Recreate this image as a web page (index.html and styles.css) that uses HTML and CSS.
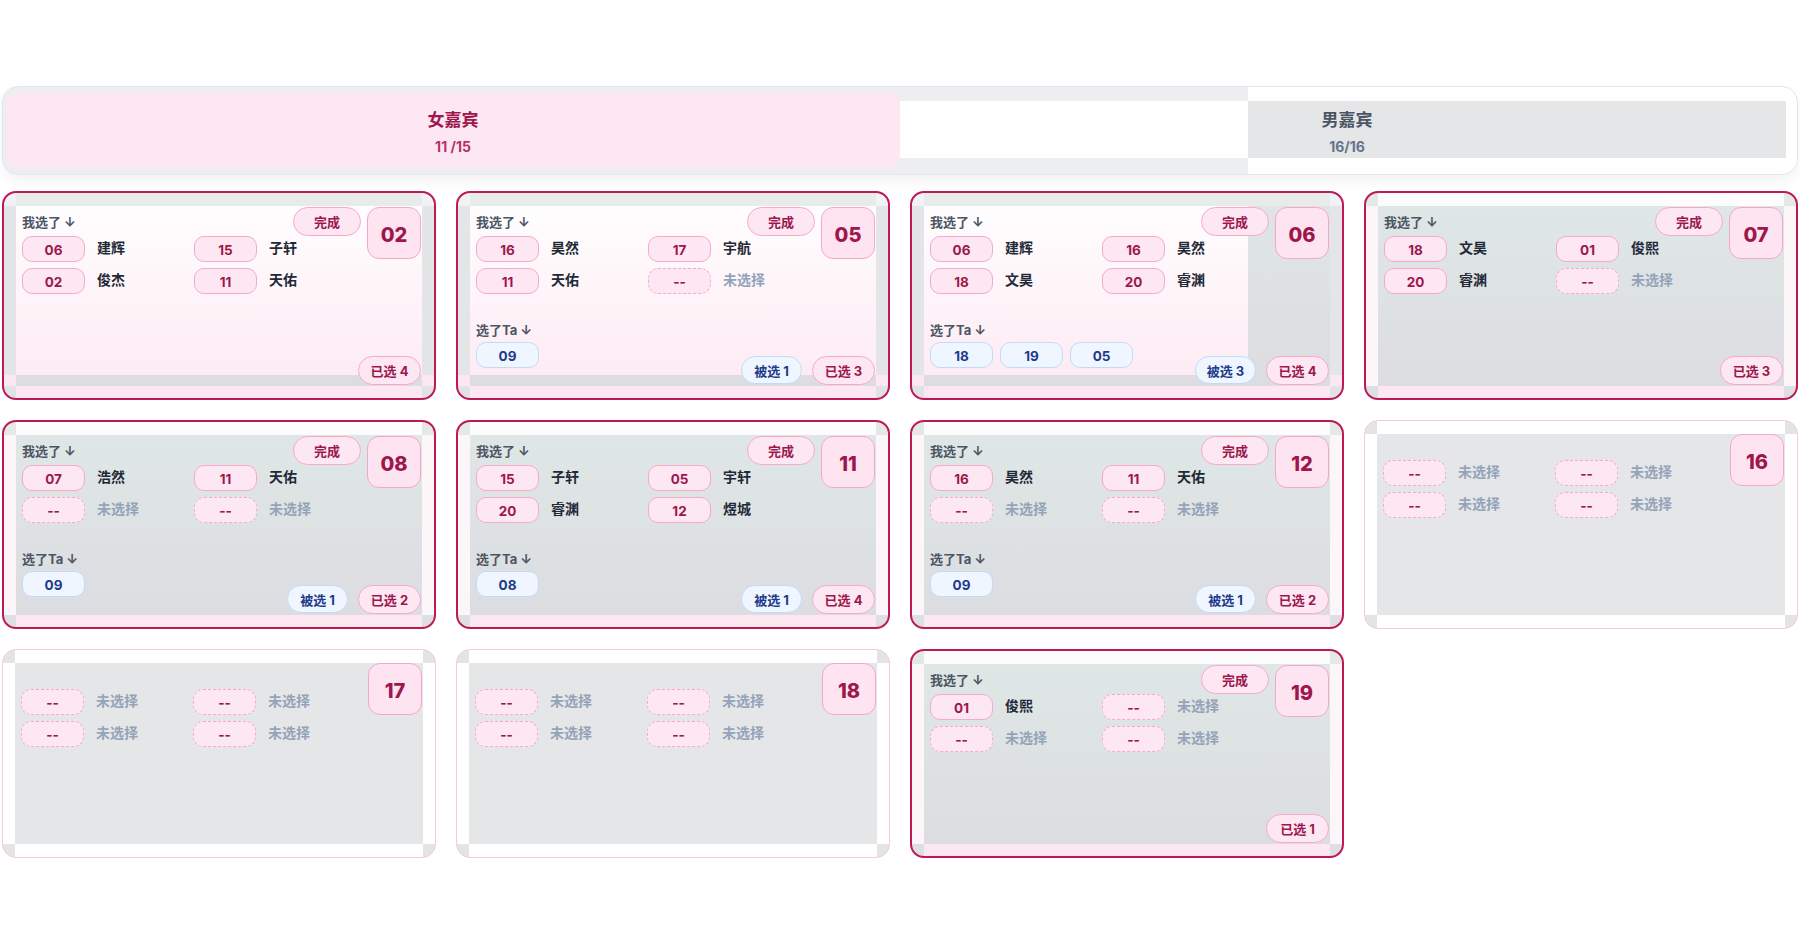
FILE: index.html
```html
<!DOCTYPE html>
<html lang="zh-CN">
<head>
<meta charset="utf-8">
<title>嘉宾选择</title>
<link rel="stylesheet" href="styles.css">
</head>
<body>
<div class="page">
  <div class="tabs">
    <div class="tab tab-f">
      <div class="tab-title">女嘉宾</div>
      <div class="tab-count">11 /15</div>
    </div>
    <div class="tab tab-m">
      <div class="tab-title">男嘉宾</div>
      <div class="tab-count">16/16</div>
    </div>
  </div>

  <div class="grid">
    <!-- 02 -->
    <div class="card pink">
      <div class="center">
        <div class="body">
          <div class="main">
            <div class="head"><span class="label">我选了 ↓</span><span class="done">完成</span></div>
            <div class="picks">
              <div class="pick"><span class="chip">06</span><span class="name">建辉</span></div>
              <div class="pick"><span class="chip">15</span><span class="name">子轩</span></div>
              <div class="pick"><span class="chip">02</span><span class="name">俊杰</span></div>
              <div class="pick"><span class="chip">11</span><span class="name">天佑</span></div>
            </div>
          </div>
          <div class="numbox">02</div>
        </div>
      </div>
      <div class="foot"><span class="pill sel">已选 4</span></div>
    </div>

    <!-- 05 -->
    <div class="card pink">
      <div class="center">
        <div class="body">
          <div class="main">
            <div class="head"><span class="label">我选了 ↓</span><span class="done">完成</span></div>
            <div class="picks">
              <div class="pick"><span class="chip">16</span><span class="name">昊然</span></div>
              <div class="pick"><span class="chip">17</span><span class="name">宇航</span></div>
              <div class="pick"><span class="chip">11</span><span class="name">天佑</span></div>
              <div class="pick"><span class="chip none">--</span><span class="name none">未选择</span></div>
            </div>
            <div class="ta-label label">选了Ta ↓</div>
            <div class="ta-row"><span class="chip blue">09</span></div>
          </div>
          <div class="numbox">05</div>
        </div>
      </div>
      <div class="foot"><span class="pill by">被选 1</span><span class="pill sel">已选 3</span></div>
    </div>

    <!-- 06 -->
    <div class="card pink split">
      <div class="center">
        <div class="body">
          <div class="main">
            <div class="head"><span class="label">我选了 ↓</span><span class="done">完成</span></div>
            <div class="picks">
              <div class="pick"><span class="chip">06</span><span class="name">建辉</span></div>
              <div class="pick"><span class="chip">16</span><span class="name">昊然</span></div>
              <div class="pick"><span class="chip">18</span><span class="name">文昊</span></div>
              <div class="pick"><span class="chip">20</span><span class="name">睿渊</span></div>
            </div>
            <div class="ta-label label">选了Ta ↓</div>
            <div class="ta-row"><span class="chip blue">18</span><span class="chip blue">19</span><span class="chip blue">05</span></div>
          </div>
          <div class="numbox">06</div>
        </div>
      </div>
      <div class="foot"><span class="pill by">被选 3</span><span class="pill sel">已选 4</span></div>
    </div>

    <!-- 07 -->
    <div class="card gray">
      <div class="center">
        <div class="body">
          <div class="main">
            <div class="head"><span class="label">我选了 ↓</span><span class="done">完成</span></div>
            <div class="picks">
              <div class="pick"><span class="chip">18</span><span class="name">文昊</span></div>
              <div class="pick"><span class="chip">01</span><span class="name">俊熙</span></div>
              <div class="pick"><span class="chip">20</span><span class="name">睿渊</span></div>
              <div class="pick"><span class="chip none">--</span><span class="name none">未选择</span></div>
            </div>
          </div>
          <div class="numbox">07</div>
        </div>
      </div>
      <div class="foot"><span class="pill sel">已选 3</span></div>
    </div>

    <!-- 08 -->
    <div class="card gray">
      <div class="center">
        <div class="body">
          <div class="main">
            <div class="head"><span class="label">我选了 ↓</span><span class="done">完成</span></div>
            <div class="picks">
              <div class="pick"><span class="chip">07</span><span class="name">浩然</span></div>
              <div class="pick"><span class="chip">11</span><span class="name">天佑</span></div>
              <div class="pick"><span class="chip none">--</span><span class="name none">未选择</span></div>
              <div class="pick"><span class="chip none">--</span><span class="name none">未选择</span></div>
            </div>
            <div class="ta-label label">选了Ta ↓</div>
            <div class="ta-row"><span class="chip blue">09</span></div>
          </div>
          <div class="numbox">08</div>
        </div>
      </div>
      <div class="foot"><span class="pill by">被选 1</span><span class="pill sel">已选 2</span></div>
    </div>

    <!-- 11 -->
    <div class="card gray">
      <div class="center">
        <div class="body">
          <div class="main">
            <div class="head"><span class="label">我选了 ↓</span><span class="done">完成</span></div>
            <div class="picks">
              <div class="pick"><span class="chip">15</span><span class="name">子轩</span></div>
              <div class="pick"><span class="chip">05</span><span class="name">宇轩</span></div>
              <div class="pick"><span class="chip">20</span><span class="name">睿渊</span></div>
              <div class="pick"><span class="chip">12</span><span class="name">煜城</span></div>
            </div>
            <div class="ta-label label">选了Ta ↓</div>
            <div class="ta-row"><span class="chip blue">08</span></div>
          </div>
          <div class="numbox">11</div>
        </div>
      </div>
      <div class="foot"><span class="pill by">被选 1</span><span class="pill sel">已选 4</span></div>
    </div>

    <!-- 12 -->
    <div class="card gray">
      <div class="center">
        <div class="body">
          <div class="main">
            <div class="head"><span class="label">我选了 ↓</span><span class="done">完成</span></div>
            <div class="picks">
              <div class="pick"><span class="chip">16</span><span class="name">昊然</span></div>
              <div class="pick"><span class="chip">11</span><span class="name">天佑</span></div>
              <div class="pick"><span class="chip none">--</span><span class="name none">未选择</span></div>
              <div class="pick"><span class="chip none">--</span><span class="name none">未选择</span></div>
            </div>
            <div class="ta-label label">选了Ta ↓</div>
            <div class="ta-row"><span class="chip blue">09</span></div>
          </div>
          <div class="numbox">12</div>
        </div>
      </div>
      <div class="foot"><span class="pill by">被选 1</span><span class="pill sel">已选 2</span></div>
    </div>

    <!-- 16 -->
    <div class="card empty">
      <div class="center">
        <div class="body">
          <div class="main">
            <div class="head blank"></div>
            <div class="picks">
              <div class="pick"><span class="chip none">--</span><span class="name none">未选择</span></div>
              <div class="pick"><span class="chip none">--</span><span class="name none">未选择</span></div>
              <div class="pick"><span class="chip none">--</span><span class="name none">未选择</span></div>
              <div class="pick"><span class="chip none">--</span><span class="name none">未选择</span></div>
            </div>
          </div>
          <div class="numbox">16</div>
        </div>
      </div>
    </div>

    <!-- 17 -->
    <div class="card empty">
      <div class="center">
        <div class="body">
          <div class="main">
            <div class="head blank"></div>
            <div class="picks">
              <div class="pick"><span class="chip none">--</span><span class="name none">未选择</span></div>
              <div class="pick"><span class="chip none">--</span><span class="name none">未选择</span></div>
              <div class="pick"><span class="chip none">--</span><span class="name none">未选择</span></div>
              <div class="pick"><span class="chip none">--</span><span class="name none">未选择</span></div>
            </div>
          </div>
          <div class="numbox">17</div>
        </div>
      </div>
    </div>

    <!-- 18 -->
    <div class="card empty">
      <div class="center">
        <div class="body">
          <div class="main">
            <div class="head blank"></div>
            <div class="picks">
              <div class="pick"><span class="chip none">--</span><span class="name none">未选择</span></div>
              <div class="pick"><span class="chip none">--</span><span class="name none">未选择</span></div>
              <div class="pick"><span class="chip none">--</span><span class="name none">未选择</span></div>
              <div class="pick"><span class="chip none">--</span><span class="name none">未选择</span></div>
            </div>
          </div>
          <div class="numbox">18</div>
        </div>
      </div>
    </div>

    <!-- 19 -->
    <div class="card gray">
      <div class="center">
        <div class="body">
          <div class="main">
            <div class="head"><span class="label">我选了 ↓</span><span class="done">完成</span></div>
            <div class="picks">
              <div class="pick"><span class="chip">01</span><span class="name">俊熙</span></div>
              <div class="pick"><span class="chip none">--</span><span class="name none">未选择</span></div>
              <div class="pick"><span class="chip none">--</span><span class="name none">未选择</span></div>
              <div class="pick"><span class="chip none">--</span><span class="name none">未选择</span></div>
            </div>
          </div>
          <div class="numbox">19</div>
        </div>
      </div>
      <div class="foot"><span class="pill sel">已选 1</span></div>
    </div>
  </div>
</div>
</body>
</html>
```

FILE: styles.css
```css
* { box-sizing: border-box; }

body {
  margin: 0;
  background: #ffffff;
  font-family: Inter, "Noto Sans CJK SC", "Noto Sans", sans-serif;
  color: #1f2937;
}

.page {
  padding: 86px 2px 0;
}

/* ---------- tabs ---------- */
.tabs {
  display: grid;
  grid-template-columns: 1fr 1fr;
  height: 89px;
  padding: 5px 3px;
  border: 1px solid #e3e6ea;
  border-radius: 16px;
  background: linear-gradient(to right, #eceef0 0 1245px, #ffffff 1245px);
  box-shadow: 0 6px 14px rgba(15, 23, 42, 0.05);
}

.tab {
  display: flex;
  flex-direction: column;
  align-items: center;
  justify-content: center;
  gap: 7px;
  padding-top: 4px;
}

.tab-f {
  background: #fce7f3;
  border-radius: 12px;
}

.tab-m {
  margin: 9px 0 11px;
  padding-top: 5px;
  background: linear-gradient(to right, #ffffff 0 348px, #e5e6e8 348px 886px, transparent 886px);
}

.tab-title {
  font-size: 17px;
  line-height: 22px;
  font-weight: 700;
}

.tab-count {
  font-size: 14px;
  line-height: 18px;
  font-weight: 700;
}

.tab-f .tab-title { color: #9d174d; }
.tab-f .tab-count { color: #b83168; }
.tab-m .tab-title { color: #4b5563; }
.tab-m .tab-count { color: #64748b; }

/* ---------- grid ---------- */
.grid {
  display: grid;
  grid-template-columns: repeat(4, 1fr);
  grid-auto-rows: 209px;
  gap: 20px;
  margin-top: 16px;
}

.card {
  position: relative;
  display: flex;
  padding: 0 12px;
  border: 2px solid #be1856;
  border-radius: 14px;
  overflow: hidden;
}

.center {
  flex: 1;
  min-width: 0;
  padding: 14px 1px 0 6px;
}

/* pink cards */
.card.pink {
  background: linear-gradient(to bottom,
    #f1f2f3 0 13px,
    #e3e5e7 13px calc(100% - 23px),
    #fde8f1 calc(100% - 23px) calc(100% - 12px),
    #e1e2e5 calc(100% - 12px));
}
.card.pink .center {
  background:
    linear-gradient(to bottom,
      #e7ebea 0 13px,
      transparent 13px calc(100% - 23px),
      #dcdde0 calc(100% - 23px) calc(100% - 12px),
      #fde8f1 calc(100% - 12px)),
    linear-gradient(to bottom, #ffffff, #fde9f2);
}
.card.pink.split .center {
  background:
    linear-gradient(to bottom,
      #e7ebea 0 13px,
      transparent 13px calc(100% - 23px),
      #dcdde0 calc(100% - 23px) calc(100% - 12px),
      #fde8f1 calc(100% - 12px)),
    linear-gradient(to bottom, #ffffff, #fde9f2) 0 0 / 324px 100% no-repeat,
    linear-gradient(to bottom, #dfe6e5, #dcdce1);
}

/* gray cards */
.card.gray {
  background: linear-gradient(to bottom,
    #e4e8e7 0 13px,
    #fdf6f9 13px calc(100% - 12px),
    #dedfe2 calc(100% - 12px));
}
.card.gray .center {
  background:
    linear-gradient(to bottom,
      #fcfcfc 0 13px,
      transparent 13px calc(100% - 12px),
      #fde8f1 calc(100% - 12px)),
    linear-gradient(to bottom, #dfe8e6, #dcdce1);
}

/* empty cards */
.card.empty {
  border: 1px solid #f6c8db;
  background: linear-gradient(to bottom,
    #e3e4e6 0 13px,
    #ffffff 13px calc(100% - 13px),
    #e3e4e6 calc(100% - 13px));
}
.card.empty .center {
  padding-top: 13px;
  background: linear-gradient(to bottom,
    #ffffff 0 13px,
    #e5e6e8 13px calc(100% - 13px),
    #ffffff calc(100% - 13px));
}

/* ---------- card content ---------- */
.body {
  display: flex;
  gap: 6px;
}

.main {
  flex: 1;
  min-width: 0;
}

.head {
  height: 29px;
  display: flex;
  align-items: center;
  justify-content: space-between;
}

.head.blank {
  height: 26px;
}

.label {
  font-size: 13px;
  line-height: 18px;
  font-weight: 700;
  color: #4b5563;
}

.done {
  width: 68px;
  height: 29px;
  border-radius: 15px;
  border: 1px solid #f6a9c9;
  background: #fce7f3;
  color: #9d174d;
  font-size: 13px;
  font-weight: 700;
  display: flex;
  align-items: center;
  justify-content: center;
}

.numbox {
  flex: none;
  width: 54px;
  height: 52px;
  padding-top: 3px;
  border-radius: 12px;
  border: 1px solid #f4a7c7;
  background: #fde4f0;
  color: #9d174d;
  font-size: 20px;
  font-weight: 800;
  display: flex;
  align-items: center;
  justify-content: center;
}

.picks {
  display: grid;
  grid-template-columns: 172px 1fr;
  row-gap: 6px;
}

.pick {
  display: flex;
  align-items: center;
  gap: 12px;
  height: 26px;
}

.chip {
  flex: none;
  width: 63px;
  height: 26px;
  padding-top: 2px;
  border-radius: 10px;
  border: 1px solid #f6a9c9;
  background: #fce7f3;
  color: #9d174d;
  font-size: 13.5px;
  font-weight: 700;
  display: flex;
  align-items: center;
  justify-content: center;
}

.chip.none {
  border-style: dashed;
}

.chip.blue {
  border-color: #c4dbf8;
  background: #eff6ff;
  color: #1e3a8a;
}

.name {
  margin-bottom: 4px;
  font-size: 14px;
  font-weight: 700;
  color: #1f2937;
}

.name.none {
  font-weight: 600;
  color: #94a3b8;
}

.ta-label {
  display: block;
  margin-top: 27px;
}

.ta-row {
  display: flex;
  gap: 7px;
  margin-top: 3px;
}

/* ---------- footer badges ---------- */
.foot {
  position: absolute;
  right: 13px;
  bottom: 13px;
  display: flex;
  align-items: flex-end;
  gap: 10px;
}

.pill {
  height: 29px;
  padding: 0 10px;
  border-radius: 15px;
  font-size: 13px;
  font-weight: 700;
  display: flex;
  align-items: center;
  justify-content: center;
}

.pill.sel {
  min-width: 63px;
  border: 1px solid #f6a9c9;
  background: #fce7f3;
  color: #9d174d;
}

.pill.by {
  min-width: 61px;
  height: 28px;
  margin-bottom: 1px;
  border: 1px solid #c4dbf8;
  background: #eff6ff;
  color: #1e3a8a;
}
```
